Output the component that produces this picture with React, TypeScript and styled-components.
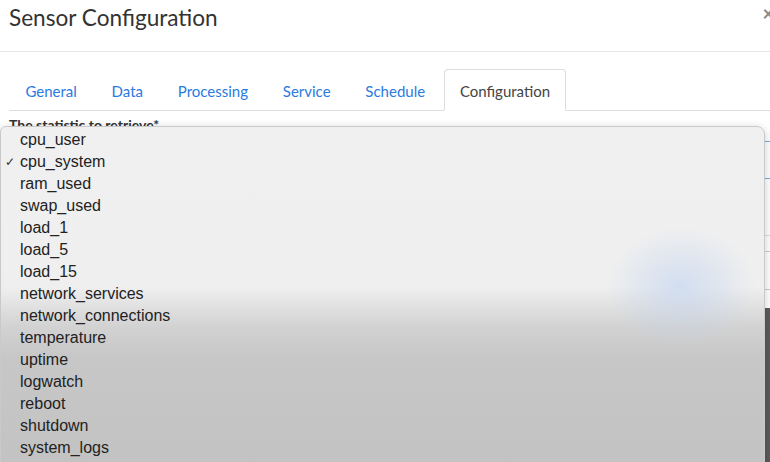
import styled, { createGlobalStyle } from "styled-components"

const GlobalStyle = createGlobalStyle`
body {
  margin: 0;
  background: #5b5b5b;
  font-family: Lato, "Open Sans", sans-serif;
}
`

const Screen = styled.div`
position: relative;
width: 770px;
height: 462px;
overflow: hidden;
`
const Modal = styled.div`
background: #fff;
width: 790px;
height: 308px;
`
const Header = styled.div`
display: flex;
justify-content: space-between;
align-items: flex-start;
height: 52px;
padding: 4px 0 0 9px;
box-sizing: border-box;
border-bottom: 1px solid #e6e6e6;
`
const Title = styled.h4`
margin: 0;
font-size: 22.6px;
font-weight: 400;
line-height: 28px;
color: #333;
`
const Close = styled.span`
font-size: 20px;
font-weight: 700;
line-height: 18px;
color: #8a8a8a;
margin-right: 16px;
`
const Body = styled.div`
padding: 17px 0 0 9px;
`
const TabList = styled.ul`
display: flex;
list-style: none;
margin: 0;
padding: 0;
border-bottom: 1px solid #ddd;
`
const Tab = styled.li<{ $active?: boolean }>`
margin: 0 2px -1px 0;
padding: 11px 15.4px 9px;
line-height: 20px;
font-size: 15px;
color: ${p => (p.$active ? "#444" : "#2a7ae2")};
background: ${p => (p.$active ? "#fff" : "transparent")};
border: 1px solid ${p => (p.$active ? "#ddd" : "transparent")};
border-bottom-color: ${p => (p.$active ? "#fff" : "transparent")};
border-radius: 4px 4px 0 0;
`
const Label = styled.div`
margin-top: 5px;
font-size: 14px;
font-weight: 700;
color: #333;
line-height: 18px;
`
const SelectBox = styled.div`
margin-top: 7px;
height: 38px;
box-sizing: border-box;
border: 1px solid #66afe9;
border-radius: 4px;
display: flex;
align-items: center;
justify-content: flex-end;
padding-right: 26px;
`
const Rule = styled.div`
margin-top: 56px;
border-top: 1px solid #ddd;
`
const InputBox = styled.div`
margin-top: 15px;
height: 39px;
box-sizing: border-box;
border: 1px solid #ccc;
border-radius: 4px;
`
const Popup = styled.div`
position: absolute;
top: 126px;
left: 0;
width: 765px;
height: 360px;
box-sizing: border-box;
padding-top: 2px;
border: 1px solid #c9c9c9;
border-radius: 6px 8px 0 0;
background:
  radial-gradient(ellipse 75px 60px at 680px 160px, rgba(190, 210, 240, 0.6), rgba(190, 210, 240, 0) 100%),
  linear-gradient(to bottom, #f0f0f0 0px, #efefef 160px, #d2d2d2 200px, #c7c7c7 230px, #c2c2c2 360px);
box-shadow: 0 2px 10px rgba(0, 0, 0, 0.2);
font-family: "Liberation Sans", Arial, sans-serif;
`
const Option = styled.div`
position: relative;
height: 22px;
line-height: 22px;
padding-left: 19px;
font-size: 16px;
color: #222;
`
const Check = styled.span`
position: absolute;
left: 4px;
top: 0;
font-size: 12px;
color: #333;
`

const options = [
  "cpu_user",
  "cpu_system",
  "ram_used",
  "swap_used",
  "load_1",
  "load_5",
  "load_15",
  "network_services",
  "network_connections",
  "temperature",
  "uptime",
  "logwatch",
  "reboot",
  "shutdown",
  "system_logs",
]

const tabs = ["General", "Data", "Processing", "Service", "Schedule", "Configuration"]

const App = () => {
  const selected = "cpu_system"
  return (
    <Screen>
      <GlobalStyle />
      <Modal>
        <Header>
          <Title>Sensor Configuration</Title>
          <Close>×</Close>
        </Header>
        <Body>
          <TabList>
            {tabs.map(t => (
              <Tab key={t} $active={t === "Configuration"}>{t}</Tab>
            ))}
          </TabList>
          <Label>The statistic to retrieve*</Label>
          <SelectBox>
            <svg width="10" height="7" viewBox="0 0 10 7">
              <path d="M1 1l4 4 4-4" fill="none" stroke="#333" strokeWidth="2" />
            </svg>
          </SelectBox>
          <Rule />
          <InputBox />
        </Body>
      </Modal>
      <Popup>
        {options.map(o => (
          <Option key={o}>
            {o === selected && <Check>✓</Check>}
            {o}
          </Option>
        ))}
      </Popup>
    </Screen>
  )
}

export default App
